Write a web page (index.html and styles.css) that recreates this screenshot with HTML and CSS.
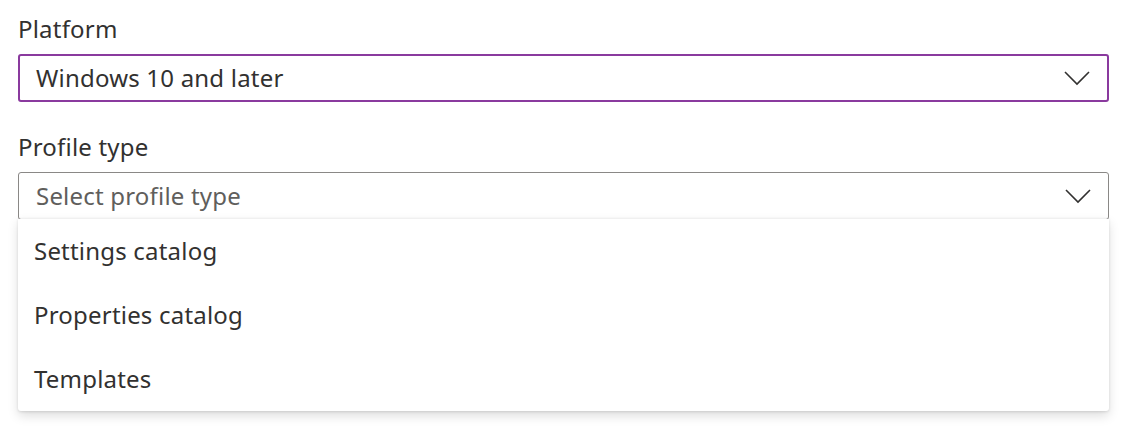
FILE: index.html
```html
<!DOCTYPE html>
<html lang="en">
<head>
<meta charset="utf-8">
<title>Profile</title>
<link rel="stylesheet" href="styles.css">
</head>
<body>
<div class="form">
  <div class="field">
    <div class="label">Platform</div>
    <div class="select select-active">
      <span class="value">Windows 10 and later</span>
      <svg class="chev" width="26" height="15" viewBox="0 0 26 15"><polyline points="1,1 13,13 25,1" fill="none" stroke="#323130" stroke-width="1.6"/></svg>
    </div>
  </div>
  <div class="field field-open">
    <div class="label">Profile type</div>
    <div class="select">
      <span class="value placeholder">Select profile type</span>
      <svg class="chev" width="26" height="15" viewBox="0 0 26 15"><polyline points="1,1 13,13 25,1" fill="none" stroke="#323130" stroke-width="1.6"/></svg>
    </div>
    <div class="menu">
      <div class="option">Settings catalog</div>
      <div class="option">Properties catalog</div>
      <div class="option">Templates</div>
    </div>
  </div>
</div>
</body>
</html>
```
FILE: styles.css
```css
html, body {
  margin: 0;
  padding: 0;
  background: #ffffff;
}
body {
  min-height: 442px;
  font-family: "Noto Sans", "Open Sans", sans-serif;
  font-size: 24px;
  letter-spacing: 0.2px;
  color: #323130;
}
.form {
  padding: 14px 15px 0 18px;
  width: 1091px;
}
.field {
  margin-bottom: 30px;
}
.field-open {
  position: relative;
}
.label {
  line-height: 30px;
  height: 30px;
  margin-bottom: 10px;
}
.select {
  box-sizing: border-box;
  height: 48px;
  border: 1.5px solid #8a8886;
  border-radius: 3px;
  display: flex;
  align-items: center;
  justify-content: space-between;
  padding: 0 17px 0 17px;
  background: #fff;
}
.select-active {
  border: 2px solid #8a3a9e;
  padding: 0 17px 0 16px;
}
.value {
  line-height: 30px;
}
.placeholder {
  color: #605e5c;
}
.chev {
  display: block;
  margin-top: 1px;
}
.menu {
  position: absolute;
  left: 0;
  right: 0;
  top: 100%;
  margin-top: -1px;
  background: #fff;
  border-radius: 0 0 3px 3px;
  box-shadow: 0 4.8px 10.8px rgba(0,0,0,0.13), 0 0.9px 2.7px rgba(0,0,0,0.11);
}
.option {
  height: 64px;
  line-height: 64px;
  padding-left: 16px;
}
```
